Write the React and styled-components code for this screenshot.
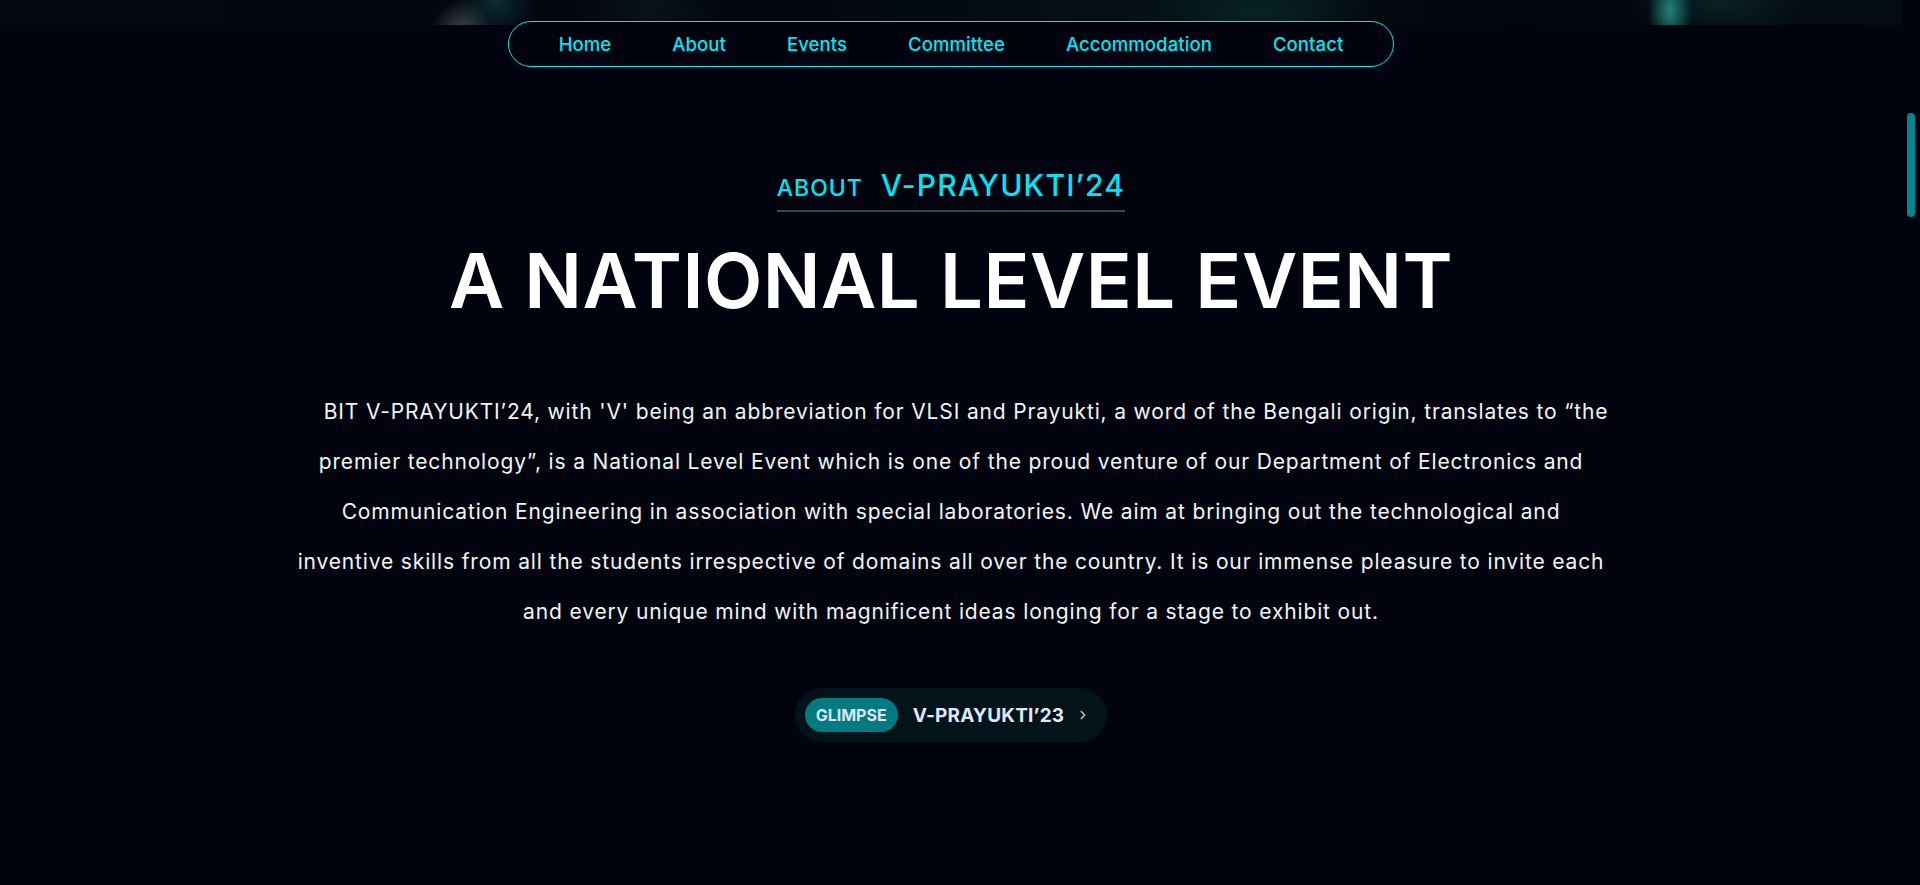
import React from 'react';
import styled, { createGlobalStyle } from 'styled-components';

const GlobalStyle = createGlobalStyle`
  html, body {
    margin: 0;
    padding: 0;
    background: #01040f;
    overflow: hidden;
  }
  body {
    font-family: Inter, "Noto Sans", sans-serif;
    color: #fff;
  }
  * { box-sizing: border-box; }
`;

const links = ['Home', 'About', 'Events', 'Committee', 'Accommodation', 'Contact'];

const App = () => {
  return (
    <>
      <GlobalStyle />
      <Page>
        <Main>
          <HeroEdge />
          <NavBar>
            {links.map((l) => (
              <NavLink key={l} href="#">{l}</NavLink>
            ))}
          </NavBar>
          <About>
            <Eyebrow>
              <small>ABOUT</small>
              <span>V-PRAYUKTI’24</span>
            </Eyebrow>
            <Title>A NATIONAL LEVEL EVENT</Title>
            <Text>
              BIT V-PRAYUKTI’24, with 'V' being an abbreviation for VLSI and Prayukti, a word of the Bengali
              origin, translates to “the<br />
              premier technology”, is a National Level Event which is one of the proud venture of our
              Department of Electronics and<br />
              Communication Engineering in association with special laboratories. We aim at bringing out the
              technological and<br />
              inventive skills from all the students irrespective of domains all over the country. It is our
              immense pleasure to invite each<br />
              and every unique mind with magnificent ideas longing for a stage to exhibit out.
            </Text>
            <Glimpse href="#">
              <Badge>GLIMPSE</Badge>
              <GlimpseLabel>V-PRAYUKTI’23</GlimpseLabel>
              <Chevron viewBox="0 0 24 24">
                <path d="M9 6l6 6-6 6" />
              </Chevron>
            </Glimpse>
          </About>
        </Main>
        <ScrollTrack>
          <Thumb />
        </ScrollTrack>
      </Page>
    </>
  );
};

const Page = styled.div`
  display: flex;
  width: 100vw;
  height: 100vh;
  overflow: hidden;
`;

const Main = styled.main`
  flex: 1;
  position: relative;
`;

const HeroEdge = styled.div`
  height: 25px;
  background:
    radial-gradient(ellipse 22px 40px at 1670px 10px, rgba(40, 150, 138, 0.85), transparent 100%),
    radial-gradient(ellipse 90px 40px at 1720px 0px, rgba(20, 80, 80, 0.35), transparent 100%),
    radial-gradient(ellipse 30px 30px at 462px 30px, rgba(110, 120, 125, 0.55), transparent 100%),
    radial-gradient(ellipse 40px 40px at 495px 0px, rgba(20, 80, 90, 0.5), transparent 100%),
    radial-gradient(ellipse 120px 40px at 1260px 10px, rgba(10, 50, 45, 0.6), transparent 100%),
    radial-gradient(ellipse 80px 30px at 650px 10px, rgba(15, 30, 40, 0.5), transparent 100%),
    linear-gradient(90deg, #030811 0%, #02060d 40%, #041014 60%, #02050c 80%, #040d14 100%);
`;

const NavBar = styled.nav`
  position: absolute;
  top: 21px;
  left: 50%;
  transform: translateX(-50%);
  width: 886px;
  height: 46px;
  display: flex;
  align-items: center;
  justify-content: center;
  gap: 61px;
  border: 1.5px solid #16dfee;
  border-radius: 24px;
  background: #01040f;
`;

const NavLink = styled.a`
  font-family: Inter, sans-serif;
  font-size: 18.5px;
  font-weight: 500;
  color: #00e8f5;
  text-decoration: none;
  letter-spacing: 0.1px;
`;

const About = styled.section`
  display: flex;
  flex-direction: column;
  align-items: center;
  padding-top: 145px;
`;

const Eyebrow = styled.h3`
  margin: 0;
  display: flex;
  align-items: baseline;
  gap: 18px;
  padding-bottom: 10px;
  border-bottom: 2px solid #3a4352;
  color: #00e5f5;
  font-weight: 500;
  line-height: 1;

  small {
    font-size: 23px;
    letter-spacing: 1px;
  }
  span {
    font-size: 30px;
    letter-spacing: 1.2px;
  }
`;

const Title = styled.h1`
  margin: 23px 0 0;
  font-size: 76px;
  font-weight: 600;
  line-height: 1.2;
  letter-spacing: 0.5px;
  color: #fff;
`;

const Text = styled.p`
  margin: 61px 0 0;
  width: 1440px;
  font-size: 21px;
  line-height: 50px;
  letter-spacing: 0.85px;
  text-align: center;
  text-indent: 30px;
  color: #f4f4f6;
`;

const Glimpse = styled.a`
  margin-top: 51px;
  display: flex;
  align-items: center;
  height: 54px;
  padding: 0 17px 0 10px;
  border-radius: 27px;
  background: #03131a;
  text-decoration: none;
`;

const Badge = styled.span`
  display: flex;
  align-items: center;
  height: 34px;
  padding: 0 11px;
  border-radius: 17px;
  background: #037a80;
  color: #dde6f8;
  font-size: 16px;
  font-weight: 700;
`;

const GlimpseLabel = styled.span`
  margin-left: 15px;
  color: #e1e8fb;
  font-size: 19px;
  font-weight: 700;
  letter-spacing: 0.2px;
`;

const Chevron = styled.svg`
  width: 14px;
  height: 14px;
  margin-left: 12px;
  fill: none;
  stroke: #b9c3d6;
  stroke-width: 2.6;
  stroke-linecap: round;
  stroke-linejoin: round;
`;

const ScrollTrack = styled.div`
  width: 18px;
  flex-shrink: 0;
  padding: 113px 0 0 5px;
`;

const Thumb = styled.div`
  width: 8px;
  height: 104px;
  border-radius: 4px;
  background: #03878c;
`;

export default App;
